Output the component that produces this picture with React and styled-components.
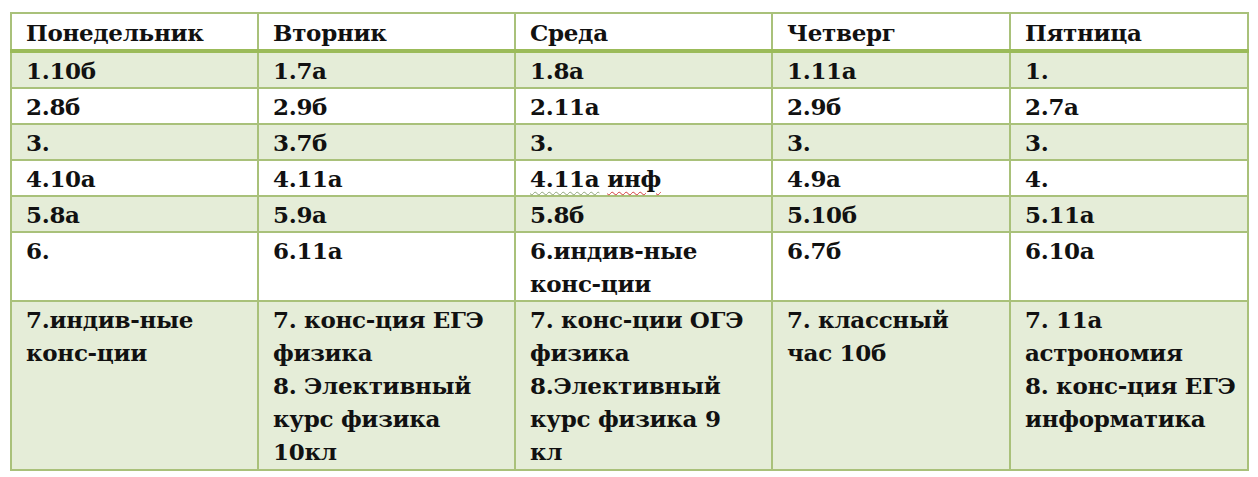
import React from "react";
import styled, { createGlobalStyle, css } from "styled-components";

const GlobalStyle = createGlobalStyle`
  body {
    margin: 0;
    background: #ffffff;
  }
`;

const Page = styled.div`
  padding: 12px 10px 0 10px;
  width: 1258px;
  height: 477px;
  box-sizing: border-box;
  background: #fff;
`;

const Table = styled.table`
  border-collapse: collapse;
  table-layout: fixed;
  width: 1237px;
  font-family: "DejaVu Serif", "Liberation Serif", serif;
  font-weight: bold;
  font-size: 23px;
  color: #111;
`;

const Row = styled.tr`
  background: ${props => (props.shaded ? "#e5edd8" : "#ffffff")};
  height: ${props => props.h}px;
`;

const Cell = styled.td`
  border: 2px solid #a9c17a;
  padding: 1px 4px 0 14px;
  vertical-align: top;
  line-height: 33px;
  white-space: pre;
  letter-spacing: -0.3px;

  ${props =>
    props.head &&
    css`
      border-bottom: 4px solid #9bbb59;
      padding-top: 2px;
    `};
`;

const Squiggle = styled.span`
  text-decoration: underline wavy ${props => props.color};
  text-decoration-thickness: 1px;
  text-underline-offset: 4px;
`;

const days = ["Понедельник", "Вторник", "Среда", "Четверг", "Пятница"];
const widths = [247, 257, 257, 238, 238];

const rows = [
  { h: 36, shaded: true, cells: ["1.10б", "1.7а", "1.8а", "1.11а", "1."] },
  { h: 35, cells: ["2.8б", "2.9б", "2.11а", "2.9б", "2.7а"] },
  { h: 36, shaded: true, cells: ["3.", "3.7б", "3.", "3.", "3."] },
  {
    h: 36,
    cells: [
      "4.10а",
      "4.11а",
      <>
        <Squiggle color="#8fa37a">4.11а</Squiggle>{" "}
        <Squiggle color="#d23c3c">инф</Squiggle>
      </>,
      "4.9а",
      "4.",
    ],
  },
  { h: 36, shaded: true, cells: ["5.8а", "5.9а", "5.8б", "5.10б", "5.11а"] },
  {
    h: 69,
    cells: ["6.", "6.11а", "6.индив-ные\nконс-ции", "6.7б", "6.10а"],
  },
  {
    h: 169,
    shaded: true,
    cells: [
      "7.индив-ные\nконс-ции",
      "7. конс-ция ЕГЭ\nфизика\n8. Элективный\nкурс физика\n10кл",
      "7. конс-ции ОГЭ\nфизика\n8.Элективный\nкурс физика 9\nкл",
      "7. классный\nчас 10б",
      "7. 11а\nастрономия\n8. конс-ция ЕГЭ\nинформатика",
    ],
  },
];

export default function App() {
  return (
    <Page>
      <GlobalStyle />
      <Table>
        <colgroup>
          {widths.map((w, i) => (
            <col key={i} style={{ width: w }} />
          ))}
        </colgroup>
        <tbody>
          <Row h={38}>
            {days.map(d => (
              <Cell head key={d}>
                {d}
              </Cell>
            ))}
          </Row>
          {rows.map((r, i) => (
            <Row key={i} h={r.h} shaded={r.shaded}>
              {r.cells.map((c, j) => (
                <Cell key={j}>{c}</Cell>
              ))}
            </Row>
          ))}
        </tbody>
      </Table>
    </Page>
  );
}
